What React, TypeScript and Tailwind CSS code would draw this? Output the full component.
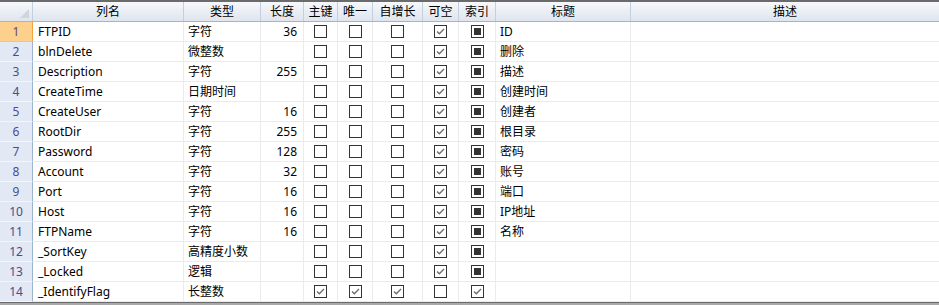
import React from "react";

type Flag = 0 | 1 | 2; // 0 empty, 1 checked, 2 filled (index)

interface FieldRow {
  name: string;
  type: string;
  length: string;
  flags: Flag[];
  title: string;
}

const ROWS: FieldRow[] = [
  { name: "FTPID", type: "字符", length: "36", flags: [0, 0, 0, 1, 2], title: "ID" },
  { name: "blnDelete", type: "微整数", length: "", flags: [0, 0, 0, 1, 2], title: "删除" },
  { name: "Description", type: "字符", length: "255", flags: [0, 0, 0, 1, 2], title: "描述" },
  { name: "CreateTime", type: "日期时间", length: "", flags: [0, 0, 0, 1, 2], title: "创建时间" },
  { name: "CreateUser", type: "字符", length: "16", flags: [0, 0, 0, 1, 2], title: "创建者" },
  { name: "RootDir", type: "字符", length: "255", flags: [0, 0, 0, 1, 2], title: "根目录" },
  { name: "Password", type: "字符", length: "128", flags: [0, 0, 0, 1, 2], title: "密码" },
  { name: "Account", type: "字符", length: "32", flags: [0, 0, 0, 1, 2], title: "账号" },
  { name: "Port", type: "字符", length: "16", flags: [0, 0, 0, 1, 2], title: "端口" },
  { name: "Host", type: "字符", length: "16", flags: [0, 0, 0, 1, 2], title: "IP地址" },
  { name: "FTPName", type: "字符", length: "16", flags: [0, 0, 0, 1, 2], title: "名称" },
  { name: "_SortKey", type: "高精度小数", length: "", flags: [0, 0, 0, 1, 2], title: "" },
  { name: "_Locked", type: "逻辑", length: "", flags: [0, 0, 0, 1, 2], title: "" },
  { name: "_IdentifyFlag", type: "长整数", length: "", flags: [1, 1, 1, 0, 1], title: "" },
];

const HEADERS = ["列名", "类型", "长度", "主键", "唯一", "自增长", "可空", "索引", "标题", "描述"];

const GRID =
  "grid grid-cols-[33px_151px_77px_43px_34px_35px_50px_36px_37px_135px_1fr]";

function Box({ state }: { state: Flag }) {
  return (
    <svg width="13" height="13" viewBox="0 0 13 13">
      <rect x="0.5" y="0.5" width="12" height="12" fill="#fff" stroke="#333" />
      {state === 1 && (
        <path d="M3 6.5 L5.3 8.8 L10 4" fill="none" stroke="#6b6b6b" strokeWidth="1.3" />
      )}
      {state === 2 && <rect x="3" y="3" width="7" height="7" fill="#333" />}
    </svg>
  );
}

export default function App() {
  return (
    <div
      className="w-[939px] h-[305px] overflow-hidden bg-white border-t-2 border-[#6b6b6b] text-[12px] text-black"
      style={{ fontFamily: '"Noto Sans", "Noto Sans CJK SC", sans-serif' }}
    >
      <div className={`${GRID} h-[20px] border-b border-[#a0b6ce] bg-gradient-to-b from-[#f6f8fb] to-[#dfe5ee]`}>
        <div className="relative border-r border-[#c3cfdd]">
          <svg className="absolute right-[3px] bottom-[3px]" width="9" height="9" viewBox="0 0 9 9">
            <path d="M9 0 L9 9 L0 9 Z" fill="#cfd6df" />
          </svg>
        </div>
        {HEADERS.map((h, i) => (
          <div
            key={h}
            className={`flex items-center justify-center leading-none ${i < HEADERS.length - 1 ? "border-r border-[#c3cfdd]" : ""}`}
          >
            {h}
          </div>
        ))}
      </div>

      {ROWS.map((r, idx) => {
        const active = idx === 0;
        return (
          <div key={r.name} className={`${GRID} h-[20px]`}>
            <div
              className={`flex items-center justify-center border-b border-r ${
                active
                  ? "bg-[#fdd08e] border-r-[#f3a33d] border-b-[#f7c27a] text-[#5a4a7a]"
                  : "bg-[#e2e9f5] border-r-[#9db4cf] border-b-[#f3f6fb] text-[#4a4b8e]"
              }`}
            >
              {idx + 1}
            </div>
            <div className="flex items-center pl-[5px] border-b border-r border-[#ebebeb]">{r.name}</div>
            <div className="flex items-center pl-[4px] border-b border-r border-[#ebebeb]">{r.type}</div>
            <div className="flex items-center justify-end pr-[6px] border-b border-r border-[#ebebeb]">
              {r.length}
            </div>
            {r.flags.map((f, i) => (
              <div key={i} className="flex items-center justify-center border-b border-r border-[#ebebeb]">
                <Box state={f} />
              </div>
            ))}
            <div className="flex items-center pl-[4px] border-b border-r border-[#ebebeb]">{r.title}</div>
            <div className="border-b border-[#ebebeb]" />
          </div>
        );
      })}

      <div className="h-[3px] border-t border-[#6b6b6b] bg-[#a9a9a9]" />
    </div>
  );
}
